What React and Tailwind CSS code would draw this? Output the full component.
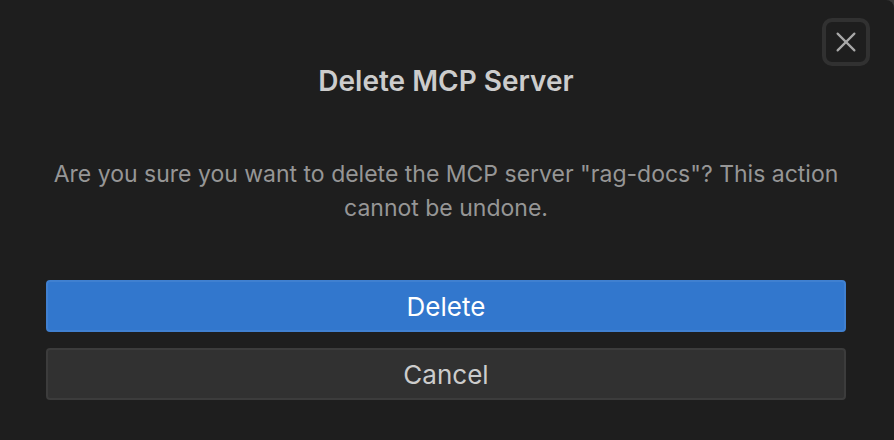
export default function App() {
  return (
    <div className="min-h-screen bg-[#3a3a3a] font-['Inter',sans-serif]">
      <main
        role="dialog"
        aria-labelledby="dialog-title"
        aria-describedby="dialog-description"
        className="relative min-h-screen w-full rounded-tr-lg bg-[#1e1e1e] pt-[60px] pr-12 pb-10 pl-[46px]"
      >
        <button
          type="button"
          aria-label="Close"
          className="absolute top-[18px] right-6 flex size-12 items-center justify-center rounded-[10px] border-4 border-[#313131] text-[#a8a8a8]"
        >
          <svg width="20" height="20" viewBox="0 0 20 20" fill="none" stroke="currentColor" strokeWidth="2.2" strokeLinecap="round">
            <path d="M1.6 1.6 18.4 18.4M18.4 1.6 1.6 18.4" />
          </svg>
        </button>
        <h1 id="dialog-title" className="text-center text-[28px] leading-[42px] font-semibold text-[#cccccc]">
          Delete MCP Server
        </h1>
        <p id="dialog-description" className="-mx-2 mt-[55px] text-center text-[23px] leading-[34px] text-[#969696]">
          Are you sure you want to delete the MCP server "rag-docs"? This action cannot be undone.
        </p>
        <div className="mt-[55px] flex flex-col gap-4">
          <button type="button" className="h-[52px] rounded-sm border-2 border-[#4080d0] bg-[#3277cd] pt-0.5 text-[26px] leading-8 text-white">
            Delete
          </button>
          <button type="button" className="h-[52px] rounded-sm border-2 border-[#3c3c3c] bg-[#313131] pt-0.5 text-[26px] leading-8 text-[#cccccc]">
            Cancel
          </button>
        </div>
      </main>
    </div>
  );
}
